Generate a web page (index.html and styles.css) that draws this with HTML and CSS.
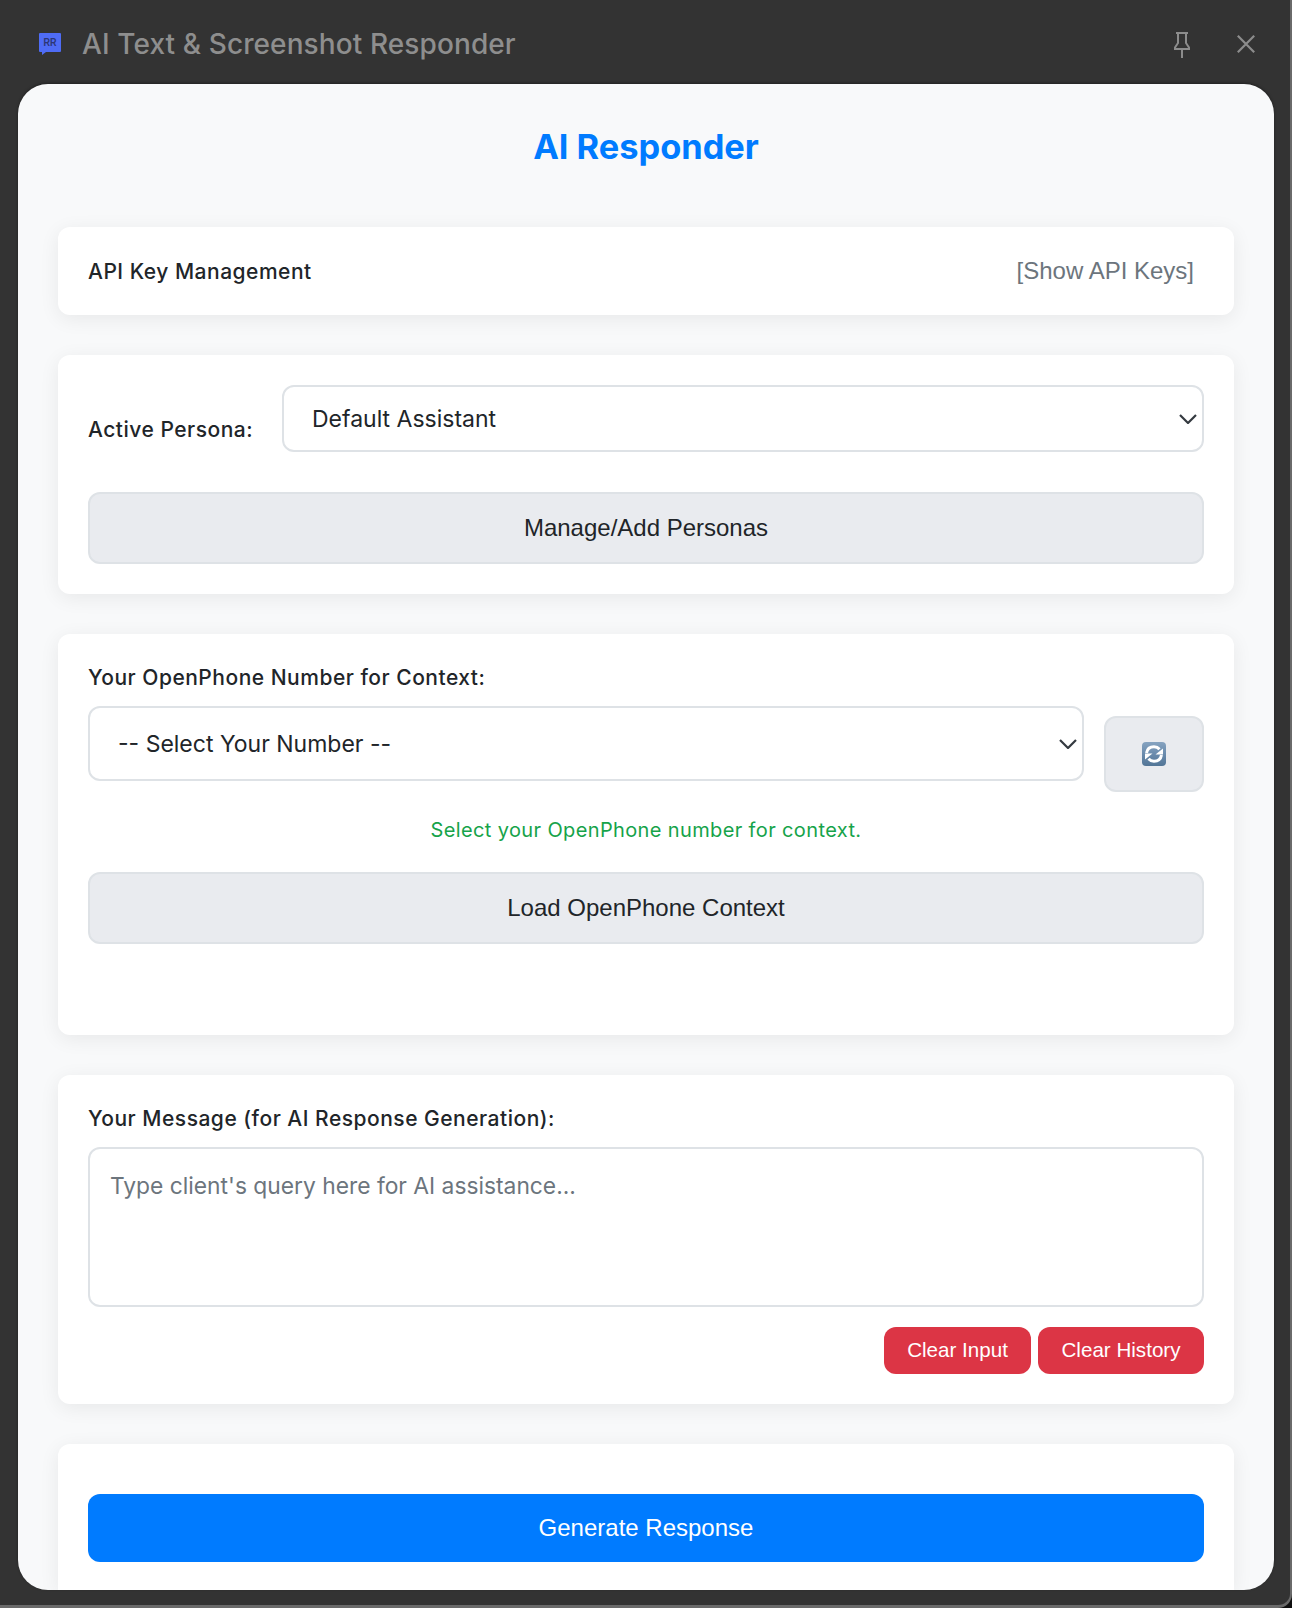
FILE: index.html
```html
<!DOCTYPE html>
<html lang="en">
<head>
    <meta charset="UTF-8">
    <meta name="viewport" content="width=device-width, initial-scale=1.0">
    <title>AI Text &amp; Screenshot Responder</title>
    <link rel="stylesheet" href="styles.css">
</head>
<body>
    <div class="frame">
        <header class="titlebar">
            <div class="titlebar-left">
                <svg class="app-icon" width="22" height="22" viewBox="0 0 22 22">
                    <path d="M1 0h20a1 1 0 0 1 1 1v17a1 1 0 0 1-1 1H7l-4 3v-3H1a1 1 0 0 1-1-1V1a1 1 0 0 1 1-1z" fill="#4f6cf5"/>
                    <text x="11" y="13" text-anchor="middle" textLength="13" lengthAdjust="spacingAndGlyphs" class="app-icon-text">RR</text>
                </svg>
                <span class="window-title">AI Text &amp; Screenshot Responder</span>
            </div>
            <div class="titlebar-right">
                <svg class="pin-icon" width="16" height="26" viewBox="0 0 16 26" fill="none" stroke="#8c8c8c" stroke-width="2">
                    <path d="M2 1h12M4 1v10L1 15.500V17h14v-1.500L12 11V1M8 17v9"/>
                </svg>
                <svg width="18" height="18" viewBox="0 0 18 18" fill="none" stroke="#8c8c8c" stroke-width="2.200">
                    <path d="M0.800 0.800l16.400 16.400M17.200 0.800L0.800 17.200"/>
                </svg>
            </div>
        </header>

        <main class="panel">
            <h1 class="app-heading">AI Responder</h1>

            <section class="card card-keys">
                <span class="field-label">API Key Management</span>
                <span class="keys-toggle">[Show API Keys]</span>
            </section>

            <section class="card">
                <div class="persona-row">
                    <label class="field-label persona-label">Active Persona:</label>
                    <div class="select-box persona-select">
                        <span>Default Assistant</span>
                        <svg class="chevron" width="18" height="10" viewBox="0 0 18 10"><path d="M1 1l8 8 8-8"/></svg>
                    </div>
                </div>
                <button class="btn-grey">Manage/Add Personas</button>
            </section>

            <section class="card card-context">
                <label class="field-label block-label">Your OpenPhone Number for Context:</label>
                <div class="number-row">
                    <div class="select-box number-select">
                        <span>-- Select Your Number --</span>
                        <svg class="chevron" width="18" height="10" viewBox="0 0 18 10"><path d="M1 1l8 8 8-8"/></svg>
                    </div>
                    <button class="btn-refresh" aria-label="Refresh">
                        <svg width="24" height="24" viewBox="0 0 24 24">
                            <defs>
                                <linearGradient id="refreshFill" x1="0" y1="0" x2="0" y2="1">
                                    <stop offset="0" stop-color="#86a3c0"/>
                                    <stop offset="0.500" stop-color="#6a8bad"/>
                                    <stop offset="1" stop-color="#527596"/>
                                </linearGradient>
                            </defs>
                            <rect width="24" height="24" rx="4" fill="url(#refreshFill)"/>
                            <path d="M4.500 11C5.200 7.200 8.200 4.800 12 4.800c2.300 0 4.200 0.900 5.500 2.400" fill="none" stroke="#fff" stroke-width="3"/>
                            <path d="M21 6.500v6h-7.500z" fill="#fff"/>
                            <path d="M19.500 13c-0.700 3.800-3.700 6.200-7.500 6.200-2.300 0-4.200-0.900-5.500-2.400" fill="none" stroke="#fff" stroke-width="3"/>
                            <path d="M3 17.500v-6h7.500z" fill="#fff"/>
                        </svg>
                    </button>
                </div>
                <p class="status-text">Select your OpenPhone number for context.</p>
                <button class="btn-grey">Load OpenPhone Context</button>
            </section>

            <section class="card card-message">
                <label class="field-label block-label">Your Message (for AI Response Generation):</label>
                <textarea class="message-input" placeholder="Type client's query here for AI assistance..."></textarea>
                <div class="clear-row">
                    <button class="btn-red btn-clear-input">Clear Input</button>
                    <button class="btn-red btn-clear-history">Clear History</button>
                </div>
            </section>

            <section class="card card-generate">
                <button class="btn-blue">Generate Response</button>
            </section>
        </main>
    </div>
</body>
</html>
```

FILE: styles.css
```css
* {
    box-sizing: border-box;
}

html, body {
    margin: 0;
    padding: 0;
    height: 100%;
    background-color: #0f0f0f;
    overflow: hidden;
}

body {
    font-family: Inter, "Liberation Sans", sans-serif;
    color: #212529;
}

.frame {
    height: 1608px;
    width: 1292px;
    background-color: #333333;
    border-right: 2px solid #6a6a6a;
    border-bottom: 3px solid #6a6a6a;
    border-bottom-right-radius: 14px;
    padding: 0 0 0 18px;
    display: flex;
    flex-direction: column;
}

/* title bar */
.titlebar {
    width: 1256px;
    height: 84px;
    flex-shrink: 0;
    display: flex;
    justify-content: space-between;
    align-items: center;
    padding: 3px 19px 0 21px;
}

.titlebar-left {
    display: flex;
    align-items: center;
}

.app-icon {
    margin-right: 21px;
}

.app-icon-text {
    font-family: "Liberation Sans", sans-serif;
    font-size: 11px;
    font-weight: bold;
    fill: #2c3676;
}

.window-title {
    font-size: 28px;
    font-weight: 500;
    letter-spacing: 0.1px;
    color: #8e8e8e;
}

.titlebar-right {
    display: flex;
    align-items: center;
    gap: 47px;
}

.pin-icon {
    margin-top: 2px;
}

/* main panel */
.panel {
    width: 1256px;
    height: 1506px;
    flex-shrink: 0;
    background-color: #f8f9fa;
    border-radius: 30px;
    box-shadow: 0 -1px 3px rgba(0, 0, 0, 0.35);
    padding: 41px 40px 0;
    overflow: hidden;
}

.app-heading {
    margin: 0 0 58px;
    text-align: center;
    font-size: 34.400px;
    line-height: 44px;
    font-weight: 700;
    color: #007bff;
}

.card {
    background: white;
    border-radius: 12px;
    padding: 30px;
    margin-bottom: 40px;
    box-shadow: 0 4px 20px rgba(0, 0, 0, 0.07);
}

.card-keys {
    height: 88px;
    display: flex;
    justify-content: space-between;
    align-items: center;
    padding: 0 40px 0 30px;
}

.field-label {
    font-size: 21px;
    font-weight: 500;
    letter-spacing: 0.5px;
}

.keys-toggle {
    font-family: "Liberation Sans", sans-serif;
    font-size: 24px;
    color: #6c757d;
}

.persona-row {
    display: flex;
    margin-bottom: 40px;
}

.persona-label {
    width: 194px;
    padding-top: 32px;
    flex-shrink: 0;
}

.select-box {
    display: flex;
    justify-content: space-between;
    align-items: center;
    border: 2px solid #dee2e6;
    border-radius: 12px;
    background: white;
    font-size: 23px;
    padding: 0 5px 0 28px;
    color: #212529;
}

.persona-select {
    flex: 1;
    height: 67px;
}

.number-select {
    flex: 1;
    height: 75px;
}

.chevron path {
    fill: none;
    stroke: #343a40;
    stroke-width: 2.200;
}

.btn-grey {
    display: block;
    width: 100%;
    height: 72px;
    background-color: #e9ebef;
    border: 2px solid #dee2e6;
    border-radius: 12px;
    font-family: "Liberation Sans", sans-serif;
    font-size: 24px;
    color: #212529;
}

.card-context {
    height: 401px;
}

.block-label {
    display: block;
    line-height: 26px;
    margin: 1px 0 15px;
}

.number-row {
    display: flex;
    align-items: flex-start;
    gap: 20px;
}

.btn-refresh {
    width: 100px;
    height: 76px;
    margin-top: 10px;
    background-color: #e9ebef;
    border: 2px solid #dee2e6;
    border-radius: 12px;
    display: flex;
    justify-content: center;
    align-items: center;
    padding: 0;
}

.status-text {
    margin: 25px 0 29px;
    text-align: center;
    font-size: 20px;
    letter-spacing: 0.37px;
    line-height: 26px;
    color: #16a34a;
}

.card-message {
    height: 329px;
}

.message-input {
    display: block;
    width: 100%;
    height: 160px;
    border: 2px solid #dee2e6;
    border-radius: 12px;
    padding: 23px 20px;
    font-family: Inter, sans-serif;
    font-size: 22.800px;
    resize: none;
    outline: none;
    margin-bottom: 20px;
}

.message-input::placeholder {
    color: #6c757d;
}

.clear-row {
    display: flex;
    justify-content: flex-end;
    gap: 7px;
}

.btn-red {
    height: 47px;
    padding: 0 0 2px;
    background-color: #dc3545;
    color: white;
    border: none;
    border-radius: 12px;
    font-family: "Liberation Sans", sans-serif;
    font-size: 20.600px;
}

.btn-clear-input {
    width: 147px;
}

.btn-clear-history {
    width: 166px;
}

.card-generate {
    height: 146px;
    margin-bottom: 0;
    padding-top: 50px;
    border-radius: 12px 12px 0 0;
}

.btn-blue {
    display: block;
    width: 100%;
    height: 68px;
    background-color: #007bff;
    color: white;
    border: none;
    border-radius: 12px;
    font-family: "Liberation Sans", sans-serif;
    font-size: 24px;
}
```
